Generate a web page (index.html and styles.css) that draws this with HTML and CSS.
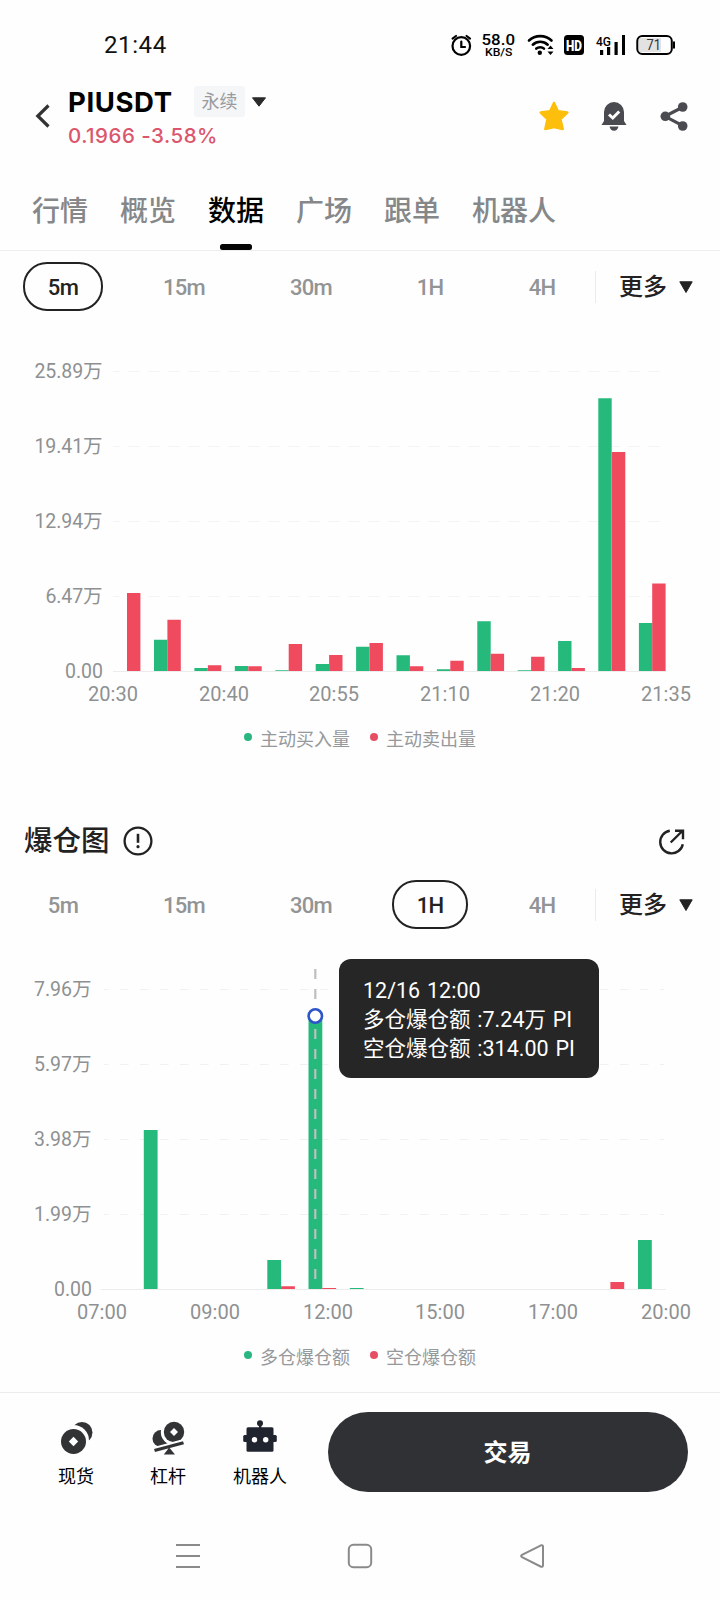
FILE: index.html
```html
<!DOCTYPE html>
<html lang="zh-CN">
<head>
<meta charset="utf-8">
<title>PIUSDT</title>
<link rel="stylesheet" href="styles.css">
</head>
<body>
<div class="screen">
  <div class="status">
    <span class="clock">21:44</span>
    <svg class="status-icons" width="232" height="30" viewBox="445 30 232 30">
      <g fill="none" stroke="#000" stroke-width="2.2" stroke-linecap="round">
        <circle cx="460.300" cy="46" r="8.800"/>
        <path d="M460.300 41.500V47H464M451.600 38.600L455 36M469 38.600L465.600 36"/>
        <path stroke-width="2.600" d="M528 40.500C534 34.700 544.500 34.700 550.500 40.500"/>
        <path stroke-width="2.600" d="M531.800 44.700C536 40.800 542.500 40.800 546.700 44.700"/>
        <path stroke-width="2.600" d="M535.300 48.600C537.500 46.700 541 46.700 543 48.600"/>
      </g>
      <circle cx="538.800" cy="52.800" r="2.200"/>
      <path d="M546.500 49L549.500 45.500L552.500 49ZM546.500 51.500L549.500 55L552.500 51.500Z"/>
      <text class="net" x="480.500" y="45" textLength="33.500" lengthAdjust="spacingAndGlyphs" font-size="15.500">58.0</text>
      <text class="net" x="484" y="56" textLength="27.500" lengthAdjust="spacingAndGlyphs" font-size="11.500">KB/S</text>
      <rect x="563" y="35" width="20" height="20" rx="3.500"/>
      <text class="hd" x="565" y="50.500" textLength="16" lengthAdjust="spacingAndGlyphs">HD</text>
      <text class="net" x="595" y="45.500" textLength="15" lengthAdjust="spacingAndGlyphs" font-size="13.500">4G</text>
      <path d="M599 50h3.200v5H599zM606 47h3.200v8H606zM613.500 42h3.200v13h-3.200zM621 35h3v20h-3z"/>
      <rect x="638" y="38" width="22" height="14" fill="#e2e2e2"/>
      <rect x="636.300" y="36" width="34.500" height="18" rx="5" fill="none" stroke="#000" stroke-width="2"/>
      <path d="M672 41.500h2v7h-2z"/>
      <text class="batt" x="645.500" y="50.300" textLength="14.500" lengthAdjust="spacingAndGlyphs">71</text>
    </svg>
  </div>

  <header class="header">
    <svg class="back" width="16" height="26" viewBox="0 0 16 26"><path d="M13.500 2.500L2.800 13L13.500 23.500" fill="none" stroke="#333" stroke-width="3.200"/></svg>
    <div class="pair">
      <div class="pair-row">
        <span class="symbol">PIUSDT</span>
        <span class="badge">永续</span>
        <svg width="16" height="10" viewBox="0 0 16 10"><path d="M1.500 .8H14.500L8 9.200Z" fill="#2b2b2b" stroke="#2b2b2b" stroke-linejoin="round"/></svg>
      </div>
      <div class="price">0.1966 -3.58%</div>
    </div>
    <div class="actions">
      <svg width="32" height="32" viewBox="0 0 32 32"><path d="M16 3L19.900 11.300L29.300 12.600L22.500 19.200L24.700 29L16 27L7.300 29L9.500 19.200L2.700 12.600L12.100 11.300Z" fill="#fdbf0b" stroke="#fdbf0b" stroke-width="2.500" stroke-linejoin="round"/></svg>
      <svg width="32" height="32" viewBox="0 0 32 32"><path d="M6 21V12A10 10 0 0 1 26 12V21L28.500 25H3.500ZM11.500 26.500H20.500Q19.500 30.700 16 30.700T11.500 26.500Z" fill="#4a4b50"/><path d="M11 14.500L14.800 18L21.200 11.500" fill="none" stroke="#fff" stroke-width="3"/></svg>
      <svg width="32" height="32" viewBox="0 0 32 32"><path d="M25 7L7 16.300L25 25.800" fill="none" stroke="#4a4b50" stroke-width="3.200"/><g fill="#4a4b50"><circle cx="24.700" cy="7" r="4.800"/><circle cx="7.300" cy="16.300" r="4.800"/><circle cx="24.700" cy="26" r="4.800"/></g></svg>
    </div>
  </header>

  <nav class="tabs">
    <span class="tab">行情</span><span class="tab">概览</span><span class="tab on">数据</span><span class="tab">广场</span><span class="tab">跟单</span><span class="tab">机器人</span>
  </nav>

  <div class="periods">
    <span class="period on">5m</span><span class="period">15m</span><span class="period">30m</span><span class="period">1H</span><span class="period">4H</span>
    <span class="more">更多<svg width="16" height="14" viewBox="0 0 16 14"><path d="M1.800 1.800H14.200L8 12.500Z" fill="#222" stroke="#222" stroke-linejoin="round"/></svg></span>
  </div>

  <svg class="chart c1" width="720" height="389" viewBox="0 322 720 389">
    <g class="grid g1"><path d="M113 371.500H661M113 446.500H661M113 521.500H661M113 596.500H661"/></g>
    <path class="axis" d="M113 671.500H666"/>
    <g class="ylab">
      <text x="34.500" y="378" textLength="68">25.89万</text><text x="34.500" y="453" textLength="68">19.41万</text><text x="34.500" y="528" textLength="68">12.94万</text><text x="45.500" y="603" textLength="57">6.47万</text><text x="65" y="678" textLength="38">0.00</text>
    </g>
    <g class="xlab">
      <text x="88" y="701" textLength="50">20:30</text><text x="199" y="701" textLength="50">20:40</text><text x="309" y="701" textLength="50">20:55</text><text x="420" y="701" textLength="50">21:10</text><text x="530" y="701" textLength="50">21:20</text><text x="641" y="701" textLength="50">21:35</text>
    </g>
    <path class="green" d="M154 671V639.700h13.400V671zM194.400 671V668h13.400V671zM234.800 671V666h13.400V671zM275.300 671V670.200h13.400V671zM315.700 671V664h13.400V671zM356.100 671V646.700h13.400V671zM396.500 671V655.300h13.400V671zM436.900 671V669.300h13.400V671zM477.300 671V621.300h13.400V671zM517.700 671V670.200h13.400V671zM558.100 671V641h13.400V671zM598.300 671V398.300h13.400V671zM638.900 671V623h13.400V671z"/>
    <path class="red" d="M127 671V593h13.400V671zM167.400 671V619.800h13.400V671zM207.900 671V665.300h13.400V671zM248.300 671V666.300h13.400V671zM288.700 671V644h13.400V671zM329.100 671V655h13.400V671zM369.500 671V643h13.400V671zM409.900 671V666.300h13.400V671zM450.300 671V660.700h13.400V671zM490.700 671V653.700h13.400V671zM531.100 671V656.700h13.400V671zM571.500 671V668h13.400V671zM611.900 671V452h13.400V671zM652.200 671V583.500h13.400V671z"/>
  </svg>
  <div class="legend"><i class="dot buy"></i><span>主动买入量</span><i class="dot sell"></i><span>主动卖出量</span></div>

  <div class="section-head">
    <h2>爆仓图</h2>
    <svg width="30" height="30" viewBox="0 0 30 30"><circle cx="15" cy="15" r="13.400" fill="none" stroke="#222" stroke-width="2.300"/><path d="M15 7.800V16.800" stroke="#222" stroke-width="2.600"/><circle cx="15" cy="20.700" r="1.600" fill="#222"/></svg>
    <svg class="open" width="30" height="30" viewBox="0 0 30 30"><g fill="none" stroke="#222" stroke-width="2.400"><path d="M12.800 4.700A11.400 11.400 0 1 0 25.800 18.200"/><path d="M13.700 16.500L25.300 5M18 4.700H26V13.200"/></g></svg>
  </div>

  <div class="periods">
    <span class="period">5m</span><span class="period">15m</span><span class="period">30m</span><span class="period on">1H</span><span class="period">4H</span>
    <span class="more">更多<svg width="16" height="14" viewBox="0 0 16 14"><path d="M1.800 1.800H14.200L8 12.500Z" fill="#222" stroke="#222" stroke-linejoin="round"/></svg></span>
  </div>

  <div class="plot">
    <svg class="chart c2" width="720" height="389" viewBox="0 940 720 389">
      <g class="grid g2"><path d="M104 989.500H664M104 1064.500H664M104 1139.500H664M104 1214.500H664"/></g>
      <path class="axis" d="M101 1289.500H666"/>
      <g class="ylab">
        <text x="34" y="996" textLength="57.500">7.96万</text><text x="34" y="1071" textLength="57.500">5.97万</text><text x="34" y="1146" textLength="57.500">3.98万</text><text x="34" y="1221" textLength="57.500">1.99万</text><text x="54" y="1296" textLength="38">0.00</text>
      </g>
      <g class="xlab">
        <text x="77" y="1319" textLength="50">07:00</text><text x="190" y="1319" textLength="50">09:00</text><text x="303" y="1319" textLength="50">12:00</text><text x="415" y="1319" textLength="50">15:00</text><text x="528" y="1319" textLength="50">17:00</text><text x="641" y="1319" textLength="50">20:00</text>
      </g>
      <path class="green" d="M143.800 1289V1130h13.800V1289zM267.300 1289V1260h13.800V1289zM308.500 1289V1016h13.800V1289zM349.800 1289V1288h13.800V1289zM638 1289V1240h13.800V1289z"/>
      <path class="red" d="M281.100 1289V1286.200h13.800V1289zM322.300 1289V1288h13.800V1289zM610.400 1289V1282h13.800V1289z"/>
      <path class="cursor" d="M315.300 969V1285"/>
      <circle cx="315.300" cy="1016" r="6.700" fill="#fff" stroke="#2d54c8" stroke-width="2.600"/>
    </svg>
    <div class="tooltip"><div>12/16 12:00</div><div>多仓爆仓额 :7.24万 PI</div><div>空仓爆仓额 :314.00 PI</div></div>
  </div>
  <div class="legend"><i class="dot buy"></i><span>多仓爆仓额</span><i class="dot sell"></i><span>空仓爆仓额</span></div>

  <footer class="footer">
    <div class="shortcut">
      <svg width="36" height="36" viewBox="0 0 36 36"><circle cx="24" cy="12.500" r="10.500" fill="#313335"/><circle cx="15.500" cy="20.500" r="15.500" fill="#fefefe"/><circle cx="15.500" cy="21.500" r="12.500" fill="#313335"/><path d="M15.500 16.800L20.200 21.500L15.500 26.200L10.800 21.500Z" fill="#fff"/></svg>
      <span>现货</span>
    </div>
    <div class="shortcut">
      <svg width="36" height="36" viewBox="0 0 36 36"><g fill="#313335"><circle cx="11" cy="18.500" r="8.500"/><circle cx="24" cy="12" r="13.200" fill="#fefefe"/><circle cx="24" cy="12" r="10.200"/><path d="M24 8L28 12L24 16L20 12Z" fill="#fff"/><path d="M2 27.500L33.500 19V23.500L3 33Z" fill="#fefefe"/><path d="M4 29L33 21.200L34 24.200L5 32ZM19.200 27.500L25 34.500H13.800Z"/></g></svg>
      <span>杠杆</span>
    </div>
    <div class="shortcut">
      <svg width="36" height="36" viewBox="0 0 36 36"><g fill="#20242f"><circle cx="18" cy="3.200" r="3"/><path d="M17 4h2.400v5H17z"/><rect x="4.500" y="7.200" width="27" height="24.500" rx="1.500"/><rect x="1.200" y="15" width="33.600" height="7" rx="1.500"/></g><circle cx="12.500" cy="19.700" r="2.700" fill="#fff"/><circle cx="23.700" cy="19.700" r="2.700" fill="#fff"/></svg>
      <span>机器人</span>
    </div>
    <button class="trade">交易</button>
  </footer>

  <div class="sysnav">
    <svg width="24" height="26" viewBox="0 0 24 26"><path d="M0 2H24M0 13H24M0 24H24"/></svg>
    <svg width="26" height="26" viewBox="0 0 26 26"><rect x="1.800" y="1.800" width="22.400" height="22.400" rx="4.500"/></svg>
    <svg width="26" height="26" viewBox="0 0 26 26"><path d="M22 2.300L3 11.800Q1.200 13 3 14.200L22 23.700Q23.900 24.200 24 22.500V3.500Q23.900 1.800 22 2.300Z"/></svg>
  </div>
</div>
</body>
</html>
```
FILE: styles.css
```css
* { box-sizing: border-box; }
body { margin: 0; background: #fff; font-family: Roboto, "Noto Sans CJK SC", sans-serif; }
svg { display: block; flex: none; }
.screen { width: 720px; height: 1600px; display: flex; flex-direction: column; background: #fefefe; overflow: hidden; }

.status { height: 80px; padding: 30px 42px 0 104px; display: flex; justify-content: space-between; }
.clock { font-size: 24px; line-height: 30px; letter-spacing: .6px; color: #111; }
.net { font-family: Roboto, sans-serif; font-weight: 500; }
.hd { font-size: 14.500px; font-weight: 900; fill: #fff; }
.batt { font-size: 14px; fill: #333; }

.header { height: 96px; padding: 6px 30px 0 35px; display: flex; }
.back { margin-top: 17px; }
.pair { margin-left: 17px; }
.pair-row { display: flex; align-items: center; height: 31px; }
.symbol { width: 125px; margin-right: 1px; padding-top: 1px; font: 700 27.500px/31px Inter, sans-serif; letter-spacing: .6px; color: #000; }
.badge { width: 51px; height: 31px; margin-right: 6px; border-radius: 3px; background: #f5f6f8; color: #999b9e; font-size: 18px; line-height: 31px; text-align: center; }
.price { font: 500 20.500px/24px Inter, sans-serif; letter-spacing: .5px; color: #db566c; margin-top: 7px; white-space: nowrap; }
.actions { margin-left: auto; margin-top: 14px; display: flex; gap: 28px; }

.tabs { height: 75px; padding: 16px 32px 0; display: flex; gap: 32px; border-bottom: 1px solid #eee; font-size: 28px; line-height: 40px; font-weight: 500; color: #858789; }
.tab { height: 58px; }
.tab.on { color: #000; display: flex; flex-direction: column; align-items: center; }
.tab.on::after { content: ""; width: 32px; height: 6px; margin-top: 12px; border-radius: 2.500px; background: #050505; }

.periods { height: 71px; padding: 11px 26px 0 24px; display: grid; grid-template-columns: 78px 164px 90px 148px 76px 1fr; align-items: start; justify-items: center; }
.period { height: 49px; padding: 0 22.500px; border: 2px solid transparent; border-radius: 24px; font-size: 22px; line-height: 47px; font-weight: 500; color: #929495; letter-spacing: -.7px; }
.period.on { border-color: #222; color: #222; }
.more { width: 99px; height: 32px; margin-top: 9px; padding-left: 23px; justify-self: end; border-left: 1px solid #ebebeb; display: flex; align-items: center; gap: 11px; font-size: 24px; line-height: 30px; font-weight: 500; color: #222; white-space: nowrap; }

.xlab { font-size: 20px; fill: #8e9192; }
.ylab { font-size: 19.500px; fill: #8e9192; }
.grid path { fill: none; stroke: #f3f4f4; }
.g1 path { stroke-dasharray: 12 8; stroke-dashoffset: 5; }
.g2 path { stroke-dasharray: 8.500 11.500; stroke-dashoffset: 4; stroke: #f0f1f1; }
.axis { stroke: #ececec; }
.green { fill: #26b97c; }
.red { fill: #f04a5f; }
.cursor { stroke: #bdbfc0; stroke-width: 2.200; stroke-dasharray: 10 10; }

.legend { height: 50px; padding: 12px 0 0 244px; display: flex; align-items: flex-start; color: #96999b; font-size: 18px; line-height: 33px; }
.legend span { width: 90px; margin-left: 8px; }
.dot { width: 8px; height: 8px; margin-top: 10px; border-radius: 50%; }
.dot.buy { background: #2bb581; }
.dot.sell { background: #e64e63; margin-left: 20px; }

.section-head { height: 108px; padding: 60px 33px 0 24px; display: flex; align-items: flex-start; }
.section-head h2 { margin: 1px 13px 0 0; font-size: 28.500px; line-height: 40px; font-weight: 500; color: #222; }
.section-head svg { margin-top: 5px; }
.section-head .open { margin-left: auto; }

.plot { position: relative; }
.tooltip { position: absolute; left: 339px; top: 19px; width: 260px; height: 119px; padding: 17px 0 0 24px; border-radius: 12px; background: #262626; color: #fff; font-size: 21.500px; line-height: 29px; word-spacing: 1.500px; white-space: nowrap; }

.footer { height: 133px; margin-top: 13px; padding: 19px 32px 0 48px; display: flex; border-top: 1px solid #ececec; }
.shortcut { width: 56px; margin-top: 8px; margin-right: 36px; display: flex; flex-direction: column; align-items: center; font-size: 18px; line-height: 26px; color: #000; white-space: nowrap; }
.shortcut span { margin-top: 8px; }
.trade { width: 360px; height: 80px; margin: 0 0 0 auto; padding: 1px 1px 0 0; border: 0; border-radius: 40px; background: #303135; color: #fff; font: 700 24px/80px Roboto, "Noto Sans CJK SC", sans-serif; }

.sysnav { padding: 18px 175px 0 176px; display: flex; justify-content: space-between; fill: none; stroke: #8a8a8a; stroke-width: 2; }
```
